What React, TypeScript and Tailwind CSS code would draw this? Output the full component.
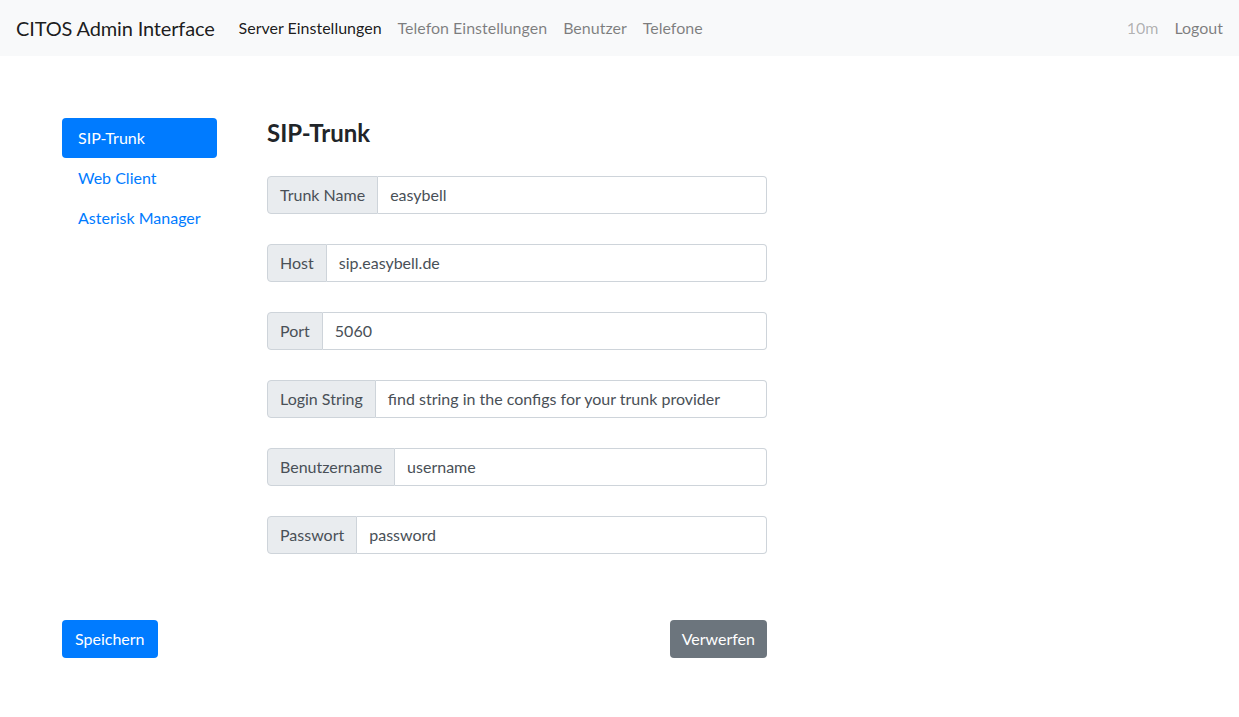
import React from "react";

const fields = [
  { label: "Trunk Name", value: "easybell" },
  { label: "Host", value: "sip.easybell.de" },
  { label: "Port", value: "5060" },
  { label: "Login String", value: "find string in the configs for your trunk provider" },
  { label: "Benutzername", value: "username" },
  { label: "Passwort", value: "password" },
];

export default function App() {
  return (
    <div className="min-h-[717px] whitespace-nowrap bg-white font-['Lato',sans-serif] text-[16px] text-[#212529]">
      <nav className="flex h-[56px] items-center bg-[#f8f9fa] px-[16px]">
        <span className="mr-[16px] text-[20px] leading-[30px] tracking-[-0.15px] text-[rgba(0,0,0,0.9)]">CITOS Admin Interface</span>
        <div className="flex">
          <span className="px-[8px] leading-[24px] text-[rgba(0,0,0,0.9)]">Server Einstellungen</span>
          <span className="px-[8px] leading-[24px] text-[rgba(0,0,0,0.5)]">Telefon Einstellungen</span>
          <span className="px-[8px] leading-[24px] text-[rgba(0,0,0,0.5)]">Benutzer</span>
          <span className="px-[8px] leading-[24px] text-[rgba(0,0,0,0.5)]">Telefone</span>
        </div>
        <div className="ml-auto flex">
          <span className="px-[8px] leading-[24px] text-[rgba(0,0,0,0.3)]">10m</span>
          <span className="pl-[8px] leading-[24px] text-[rgba(0,0,0,0.5)]">Logout</span>
        </div>
      </nav>
      <main className="px-[62px] pt-[62px]">
        <div className="flex w-[705px] gap-[50px]">
          <div className="flex w-[155px] flex-col">
            <span className="rounded-[4px] bg-[#007bff] px-[16px] py-[8px] leading-[24px] text-white">SIP-Trunk</span>
            <span className="px-[16px] py-[8px] leading-[24px] text-[#007bff]">Web Client</span>
            <span className="px-[16px] py-[8px] leading-[24px] text-[#007bff]">Asterisk Manager</span>
          </div>
          <div className="w-[500px]">
            <h4 className="mb-[29px] text-[24px] font-bold leading-[29px] text-[#212529]">SIP-Trunk</h4>
            <div className="flex flex-col gap-[30px]">
              {fields.map((f) => (
                <div key={f.label} className="flex h-[38px]">
                  <span className="flex items-center rounded-l-[4px] border border-[#ced4da] bg-[#e9ecef] px-[12px] leading-[24px] text-[#495057]">
                    {f.label}
                  </span>
                  <span className="flex flex-1 items-center rounded-r-[4px] border border-l-0 border-[#ced4da] bg-white px-[12px] leading-[24px] text-[#495057]">
                    {f.value}
                  </span>
                </div>
              ))}
            </div>
          </div>
        </div>
        <div className="mt-[66px] flex w-[705px] justify-between">
          <button className="h-[38px] rounded-[4px] bg-[#007bff] px-[13px] leading-[24px] text-white">Speichern</button>
          <button className="h-[38px] rounded-[4px] bg-[#6c757d] px-[12px] leading-[24px] text-white">Verwerfen</button>
        </div>
      </main>
    </div>
  );
}
